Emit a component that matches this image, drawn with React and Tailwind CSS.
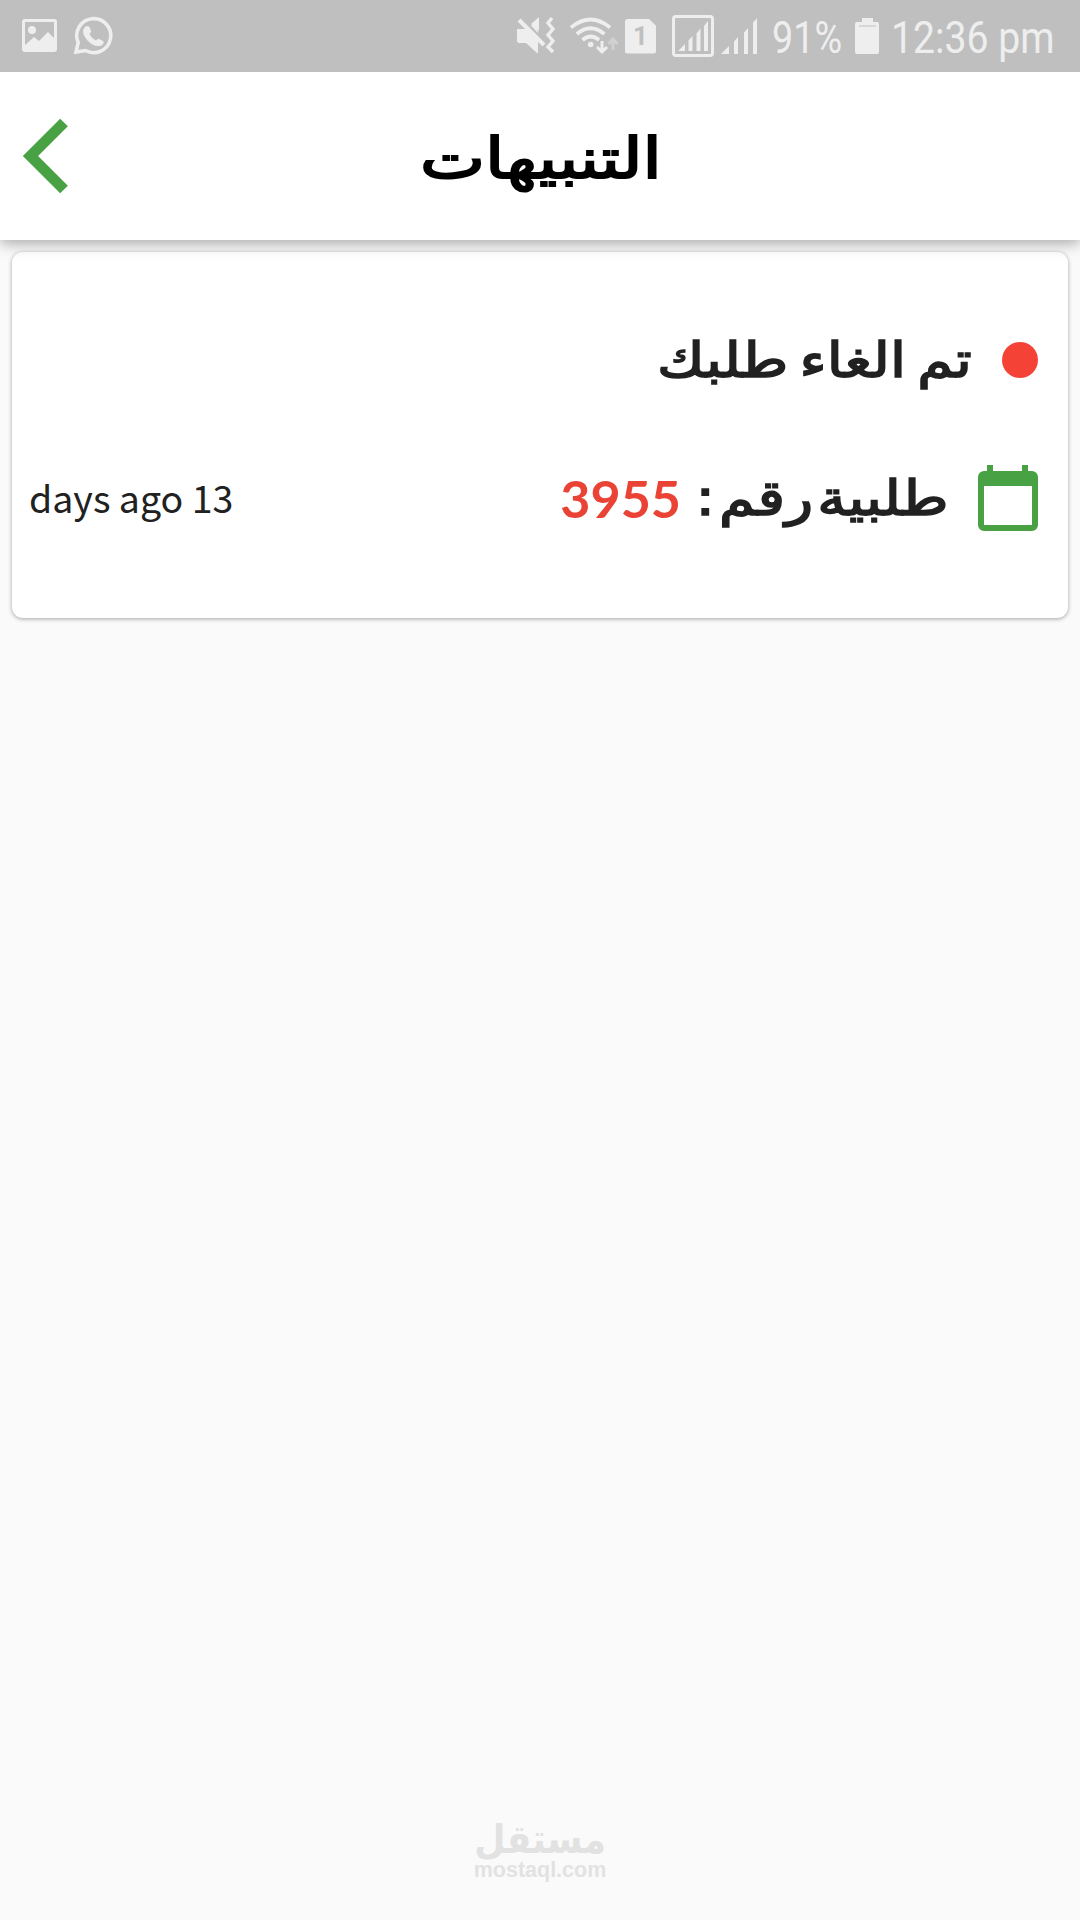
import React from 'react';

function StatusBar() {
  return (
    <div dir="ltr" className="relative z-20 h-[72px] bg-[#bfbfbf] text-[#eeeeee] flex items-center pl-[21px] pr-[26px] font-[Roboto,sans-serif]">
      {/* Notifications */}
      <svg className="w-[37px] h-[36px]" viewBox="0 0 37 36" fill="currentColor">
        <path
          fillRule="evenodd"
          d="M4 1h29a3 3 0 013 3v27a3 3 0 01-3 3H4a3 3 0 01-3-3V4a3 3 0 013-3zm0 3v23l9-8 5 4 9-9 6 6V4zM11 8a4 4 0 110 8 4 4 0 010-8z"
        />
      </svg>
      <svg className="w-[40px] h-[40px] ml-[15px]" viewBox="0 0 40 40" fill="none">
        <path d="M3 36l2.200-9.500A17 17 0 1112.500 34.500z" stroke="currentColor" strokeWidth="3.600" />
        <path
          d="M12 11c2-2 4-1 5 1l1 3c.4 1-1 2-1.500 3 1.500 3 3.500 5 6.500 6.500 1-.7 2-2 3-1.600l4 2c1.500 1 .5 3-1 4-4 3-10 0-14-4s-7-10-3-13.900z"
          fill="currentColor"
        />
      </svg>

      <div className="flex-1" />

      {/* Device state */}
      <svg className="w-[40px] h-[40px]" viewBox="0 0 40 40">
        <path d="M1 13h9l7-5 5 7v22h-1L10 27H3a2 2 0 01-2-2z M15 8l8-7v14z" fill="currentColor" />
        <path d="M6 2l24 26" stroke="#bfbfbf" strokeWidth="3" />
        <path d="M3 4l25 25" stroke="currentColor" strokeWidth="4" />
        <path d="M36 1l-4 5 5 6-5 6 5 6-5 6 5 5" fill="none" stroke="currentColor" strokeWidth="3.400" transform="translate(0 1)" />
      </svg>
      <svg className="w-[49px] h-[40px] ml-[14px]" viewBox="0 0 49 40" fill="none" stroke="currentColor">
        <path d="M1 11.500q19.500-16 39 0M6.800 18q13.700-11.500 27.500 0M12.500 24q8.200-7 16.500 0" strokeWidth="3.700" />
        <circle cx="20.700" cy="28.500" r="2.800" fill="currentColor" stroke="none" />
        <path d="M32 25v11M27 31l5 5 5-5" strokeWidth="3" />
        <path d="M43 34V23M38.500 28l4.500-5 4.500 5" strokeWidth="3" opacity="0.4" />
      </svg>
      <div className="w-[31px] h-[35px] ml-[6px] bg-[#eeeeee] rounded-[3px] [clip-path:polygon(0_0,76%_0,100%_21%,100%_100%,0_100%)] flex items-center justify-center">
        <span className="text-[#bfbfbf] text-[26px] leading-[35px] font-bold">1</span>
      </div>
      <svg className="w-[42px] h-[42px] ml-[16px]" viewBox="0 0 42 42" fill="currentColor">
        <rect x="1.500" y="1.500" width="39" height="39" rx="2.500" fill="none" stroke="currentColor" strokeWidth="3" />
        <path d="M6 36l7-7v7zM16.500 36V25.500L20.500 21v15zM24.500 36V18.500l4-5V36zM32 36V11l4-5v30z" />
      </svg>
      <svg className="w-[37px] h-[37px] ml-[7px]" viewBox="0 0 37 37" fill="currentColor">
        <path d="M0 36l8-8v8zM13 36V23.500L17 19v17zM23 36V14.500l4-4.500v26zM32 36V4.500L36 0v36z" />
      </svg>
      <div className="w-[70px] ml-[14px] text-[45px] leading-[72px] whitespace-nowrap pt-[3px]">
        <span className="inline-block origin-left scale-x-[0.84]">91%</span>
      </div>
      <svg className="w-[24px] h-[37px] ml-[13px]" viewBox="0 0 24 37">
        <path d="M7 0h11v4h4a2 2 0 012 2v28a2 2 0 01-2 2H2a2 2 0 01-2-2V6a2 2 0 012-2h5z" fill="currentColor" />
        <path d="M4 8h17" stroke="#c8c8c8" strokeWidth="1.200" />
      </svg>
      <div className="w-[163px] ml-[12px] text-[45px] leading-[72px] whitespace-nowrap pt-[3px]">
        <span className="inline-block origin-left scale-x-[0.87]">12:36 pm</span>
      </div>
    </div>
  );
}

function Header({ title }) {
  return (
    <header dir="ltr" className="relative z-10 h-[168px] bg-white shadow-[0_3px_14px_rgba(0,0,0,0.35)] flex items-center">
      <button className="w-[120px] h-full flex items-center pl-[22px]" aria-label="back">
        <svg className="w-[47px] h-[76px]" viewBox="0 0 47 76">
          <path d="M42 4.500L8.500 38 42 71.500" fill="none" stroke="#48a142" strokeWidth="10.800" />
        </svg>
      </button>
      <h1 className="flex-1 pt-[5px] pr-[118px] text-center text-black text-[56px] leading-[80px] whitespace-nowrap [-webkit-text-stroke:2px_currentColor]">
        <span dir="rtl" className="inline-block scale-x-[1.235]">{title}</span>
      </h1>
    </header>
  );
}

function NotificationCard({ message, label, number, time }) {
  return (
    <article className="mx-[12px] mt-[12px] h-[366px] bg-white rounded-[11px] shadow-[0_1px_4px_rgba(0,0,0,0.35)] pt-[68px] pr-[30px] pl-[17px] text-[#212121]">
      <div className="h-[80px] flex items-center">
        <span className="w-[36px] h-[36px] rounded-full bg-[#f44336]" />
        <p className="mr-[30px] pt-[2px] text-[49px] leading-[80px] whitespace-nowrap [-webkit-text-stroke:1.6px_currentColor]">
          <span className="inline-block origin-right scale-x-[1.18] [word-spacing:-6px]">{message}</span>
        </p>
      </div>
      <div className="mt-[58px] h-[80px] flex items-center">
        <svg className="w-[60px] h-[67px]" viewBox="0 0 60 67">
          <path
            fillRule="evenodd"
            fill="#48a142"
            d="M9 0h6v6h29V0h6v6h4a6 6 0 016 6v48a6 6 0 01-6 6H6a6 6 0 01-6-6V12a6 6 0 016-6h3zM6 21v39h48V21z"
          />
        </svg>
        <p className="mr-[30px] pt-[2px] w-[256px] text-[49px] leading-[80px] whitespace-nowrap [-webkit-text-stroke:1.6px_currentColor]">
          <span className="inline-block origin-right scale-x-[1.18] [word-spacing:-12px]">{label}</span>
        </p>
        <span dir="ltr" className="mr-[11px] text-[52px] leading-[80px] font-bold text-[#ea4335] font-[Lato,sans-serif]">{number}</span>
        <time dir="ltr" className="mr-auto pb-[2px] text-[37.500px] leading-[78px] whitespace-nowrap font-['Noto_Sans_CJK_SC',sans-serif]">{time}</time>
      </div>
    </article>
  );
}

function App() {
  return (
    <div dir="rtl" className="w-[1080px] h-[1920px] bg-[#fafafa] flex flex-col overflow-hidden font-['DejaVu_Sans',sans-serif]">
      <StatusBar />
      <Header title="التنبيهات" />
      <main className="flex-1">
        <NotificationCard message="تم الغاء طلبك" label="طلبية رقم :" number="3955" time="days ago 13" />
      </main>
      <footer className="h-[102px] text-[#e2e2e2] flex flex-col items-center font-bold">
        <span className="text-[40px] leading-[42px] scale-x-[0.9]">مستقل</span>
        <span dir="ltr" className="text-[21.500px] leading-[20px] font-['Liberation_Sans',sans-serif]">mostaql.com</span>
      </footer>
    </div>
  );
}

export default App;
